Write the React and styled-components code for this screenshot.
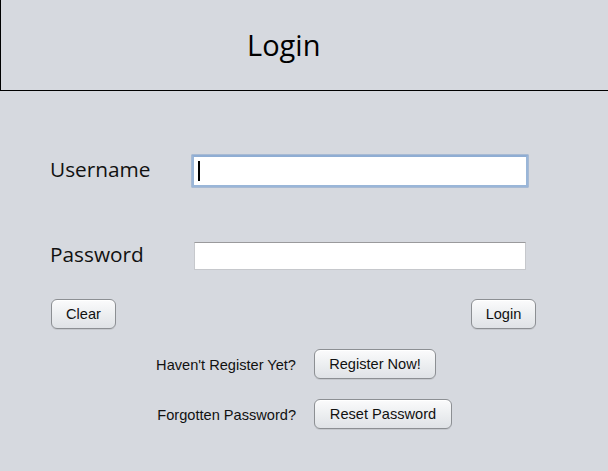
import React from "react";
import styled, { createGlobalStyle } from "styled-components";

const Global = createGlobalStyle`
  html, body { margin: 0; padding: 0; background: #d6d9df; }
  body { width: 608px; height: 471px; overflow: hidden; }
  #root { height: 471px; }
`;

const Frame = styled.div`
  height: 471px;
  background: #d6d9df;
  display: flex;
  flex-direction: column;
  font-family: "Liberation Sans", Arial, sans-serif;
`;

const Header = styled.header`
  box-sizing: border-box;
  height: 91px;
  margin-right: -4px;
  border-left: 1px solid #000;
  border-bottom: 1px solid #000;
  display: flex;
  align-items: center;
  padding-left: 246px;
  padding-bottom: 2px;
`;

const Title = styled.h1`
  margin: 0;
  font-family: "Open Sans", "Noto Sans", sans-serif;
  font-weight: 400;
  font-size: 29px;
  color: #000;
`;

const Body = styled.main`
  padding: 64px 0 0 50px;
  display: flex;
  flex-direction: column;
`;

const Fields = styled.div`
  display: grid;
  grid-template-columns: 142px 336px;
  grid-auto-rows: 32px;
  row-gap: 53px;
  align-items: center;
`;

const Label = styled.label`
  font-family: "Open Sans", "Noto Sans", sans-serif;
  font-size: 20.8px;
  color: #111;
  line-height: 1;
  padding-bottom: 3px;
`;

const FieldOuter = styled.div`
  box-sizing: border-box;
  height: 32px;
  padding: ${p => (p.$focused ? "0" : "2px")};
`;

const FieldBox = styled.div`
  box-sizing: border-box;
  height: 100%;
  background: #fff;
  border: ${p => (p.$focused ? "2px solid #9ab6d8" : "1px solid #c6c8cc")};
  border-top-color: ${p => (p.$focused ? "#8fadd3" : "#9a9a9c")};
  box-shadow: ${p => (p.$focused ? "0 0 0 0.5px #7a9cc8" : "none")};
  display: flex;
  align-items: center;
  padding-left: 4px;
`;

const Caret = styled.span`
  display: block;
  width: 2px;
  height: 20px;
  background: #000;
`;

const ButtonRow = styled.div`
  display: flex;
  justify-content: space-between;
  width: 485px;
  margin-top: 27px;
  padding-left: 1px;
`;

const Button = styled.button`
  box-sizing: border-box;
  height: 30px;
  padding: 0 8px;
  min-width: ${p => p.$min || 0}px;
  border: 1px solid #8c8f93;
  border-radius: 6px;
  background: linear-gradient(to bottom, #fbfbfc 0%, #eef0f2 45%, #dfe2e6 100%);
  box-shadow: inset 0 1px 0 #fff, 0 1px 0 rgba(0,0,0,0.08);
  font-family: "Liberation Sans", Arial, sans-serif;
  font-size: 14.6px;
  color: #111;
  cursor: pointer;
`;

const Links = styled.div`
  display: grid;
  grid-template-columns: 140px auto;
  column-gap: 18px;
  row-gap: 20px;
  margin-top: 20px;
  margin-left: 106px;
  justify-items: start;
  align-items: center;
`;

const Prompt = styled.span`
  font-size: 14.6px;
  color: #111;
  justify-self: end;
  white-space: nowrap;
  padding-top: 2px;
`;

export default function App() {
  return (
    <Frame>
      <Global />
      <Header>
        <Title>Login</Title>
      </Header>
      <Body>
        <Fields>
          <Label>Username</Label>
          <FieldOuter $focused>
            <FieldBox $focused>
              <Caret />
            </FieldBox>
          </FieldOuter>
          <Label>Password</Label>
          <FieldOuter>
            <FieldBox />
          </FieldOuter>
        </Fields>
        <ButtonRow>
          <Button $min={65}>Clear</Button>
          <Button $min={65}>Login</Button>
        </ButtonRow>
        <Links>
          <Prompt>Haven't Register Yet?</Prompt>
          <Button $min={122}>Register Now!</Button>
          <Prompt>Forgotten Password?</Prompt>
          <Button $min={138}>Reset Password</Button>
        </Links>
      </Body>
    </Frame>
  );
}
